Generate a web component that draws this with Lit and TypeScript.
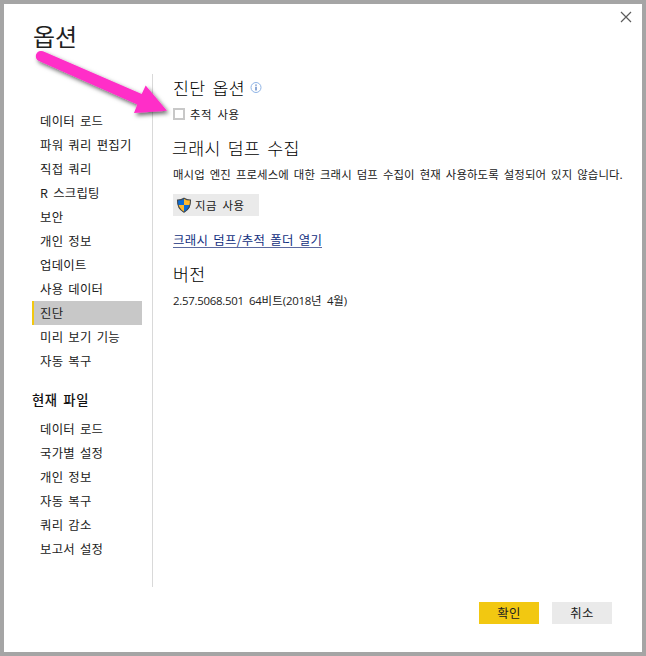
import { LitElement, html, css } from "lit";
import { customElement, property } from "lit/decorators.js";
import { classMap } from "lit/directives/class-map.js";

const GLOBAL_PAGES = [
  "데이터 로드", "파워 쿼리 편집기", "직접 쿼리", "R 스크립팅", "보안", "개인 정보",
  "업데이트", "사용 데이터", "진단", "미리 보기 기능", "자동 복구",
];
const FILE_PAGES = ["데이터 로드", "국가별 설정", "개인 정보", "자동 복구", "쿼리 감소", "보고서 설정"];

@customElement("options-nav")
class OptionsNav extends LitElement {
  @property() selected = "";
  @property({ attribute: false }) pages: string[] = [];

  static styles = css`
    :host { display: block; width: 110px; }
    .item {
      box-sizing: border-box; height: 24px; line-height: 25px;
      padding-left: 6px; border-left: 2px solid transparent; white-space: nowrap;
    }
    .item.selected { background: #c8c8c8; border-left-color: #f2c811; }
  `;

  render() {
    return this.pages.map(
      (p) => html`<div class=${classMap({ item: true, selected: p === this.selected })}>${p}</div>`
    );
  }
}

@customElement("app-root")
class AppRoot extends LitElement {
  static styles = css`
    :host {
      display: block; position: relative; box-sizing: border-box;
      width: 646px; height: 656px; border: 4px solid #a5a5a5; background: #fff;
      font-family: "Noto Sans CJK KR", "Noto Sans", sans-serif;
      font-size: 12.4px; letter-spacing: 0.25px; word-spacing: 2px; color: #212121;
      overflow: hidden;
    }
    .dialog { display: flex; flex-direction: column; height: 100%; }
    .top { display: flex; justify-content: space-between; height: 70px; padding: 0 10px 0 29px; }
    .title { margin-top: 14px; font-size: 24px; line-height: 36px; letter-spacing: 0; font-weight: 400; }
    .close { width: 12px; height: 12px; margin-top: 7px; }
    .body { display: flex; height: 513px; padding-left: 28px; }
    .side { width: 121px; padding-top: 35px; box-sizing: border-box; border-right: 1px solid #d9d9d9; }
    .group { height: 44px; line-height: 30px; padding-top: 12px; box-sizing: border-box; font-size: 13.3px; letter-spacing: 0.63px; font-weight: 500; color: #111; }
    .content { padding-left: 20px; white-space: nowrap; }
    .h { font-size: 17.3px; letter-spacing: 0.3px; word-spacing: 3px; line-height: 28px; height: 28px; font-weight: 300; color: #000; display: flex; align-items: center; }
    .info { margin-left: 5px; width: 12px; height: 12px; }
    .small { font-size: 11.4px; letter-spacing: 0.09px; word-spacing: 2.4px; }
    .check, .enable { letter-spacing: 0.5px; }
    .check { display: flex; align-items: center; height: 24px; line-height: 24px; }
    .box { box-sizing: border-box; width: 12px; height: 12px; border: 2px solid #c8c8c8; margin-right: 5px; }
    .dump { margin-top: 8px; margin-left: -1px; }
    .para { height: 24px; line-height: 24px; }
    .enable {
      display: flex; align-items: center; box-sizing: border-box; width: 86px; height: 22px;
      margin-top: 8px; padding-left: 3px; background: #eaeaea; line-height: 20px;
    }
    .shield { width: 16px; height: 16px; margin-right: 3px; }
    .link { display: inline-block; margin-top: 16px; height: 16px; line-height: 16px; box-sizing: border-box; border-bottom: 1px solid #5b69a0; color: #122f80; letter-spacing: 0.31px; }
    .version { margin-top: 11px; }
    .ver { letter-spacing: 0.2px; }
    .num { font-family: "Open Sans", "Noto Sans", sans-serif; letter-spacing: -0.25px; }
    .actions { display: flex; gap: 13px; justify-content: flex-end; margin-top: 15px; padding-right: 30px; }
    .btn { width: 60px; height: 22px; line-height: 23px; text-align: center; background: #eaeaea; }
    .btn.primary { background: #f2c811; }
    .arrow { position: absolute; left: 0; top: 0; width: 186px; height: 136px; pointer-events: none; }
  `;

  render() {
    return html`
      <div class="dialog">
        <div class="top">
          <div class="title">옵션</div>
          <svg class="close" viewBox="0 0 12 12"><path d="M1 1L11 11M11 1L1 11" stroke="#5c5c5c" stroke-width="1.2" fill="none"/></svg>
        </div>
        <div class="body">
          <div class="side">
            <options-nav .pages=${GLOBAL_PAGES} selected="진단"></options-nav>
            <div class="group">현재 파일</div>
            <options-nav .pages=${FILE_PAGES}></options-nav>
          </div>
          <div class="content">
            <div class="h">진단 옵션
              <svg class="info" viewBox="0 0 12 12"><circle cx="6" cy="5.500" r="5" fill="none" stroke="#8fb4e6"/><path d="M6 4.700V8.500M6 2.500V3.700" stroke="#2f62b4" stroke-width="1.1"/></svg>
            </div>
            <div class="check small"><span class="box"></span>추적 사용</div>
            <div class="h dump">크래시 덤프 수집</div>
            <div class="para small">매시업 엔진 프로세스에 대한 크래시 덤프 수집이 현재 사용하도록 설정되어 있지 않습니다.</div>
            <div class="enable small">
              <svg class="shield" viewBox="0 0 16 16">
                <path d="M8 1.2C6 2.6 3.8 3 1.5 3C1.3 8.5 3 12.5 8 15.2V8H8Z" fill="#0a6cd6"/>
                <path d="M8 1.2C10 2.6 12.2 3 14.5 3C14.7 8.5 13 12.5 8 15.2Z" fill="#fdb92e"/>
                <path d="M8 8H14.2C13.6 11.2 12 13.2 8 15.2Z" fill="#0a6cd6"/>
                <path d="M8 8H1.8C2.4 11.2 4 13.2 8 15.2Z" fill="#fdb92e"/>
                <path d="M8 1.2C6 2.6 3.8 3 1.5 3C1.3 8.5 3 12.5 8 15.2C13 12.5 14.7 8.5 14.5 3C12.2 3 10 2.6 8 1.2Z" fill="none" stroke="#45494d" stroke-width="1.1"/>
              </svg>지금 사용
            </div>
            <div><span class="link">크래시 덤프/추적 폴더 열기</span></div>
            <div class="h version">버전</div>
            <div class="para small ver"><span class="num">2.57.5068.501 64</span>비트<span class="num">(2018</span>년 <span class="num">4</span>월<span class="num">)</span></div>
          </div>
        </div>
        <div class="actions">
          <div class="btn primary">확인</div>
          <div class="btn">취소</div>
        </div>
      </div>
      <svg class="arrow" viewBox="4 4 186 136">
        <defs><filter id="shadow" x="-10%" y="-10%" width="125%" height="130%"><feDropShadow dx="2" dy="2.5" stdDeviation="2" flood-color="#000" flood-opacity="0.6"/></filter></defs>
        <path filter="url(#shadow)" fill="#ff2dc8" d="M43 51.300L141.700 94L145.700 85.500L167 110.700L134 113L137.300 104.500L39 61A5.200 5.200 0 0 1 43 51.300Z"/>
      </svg>
    `;
  }
}
